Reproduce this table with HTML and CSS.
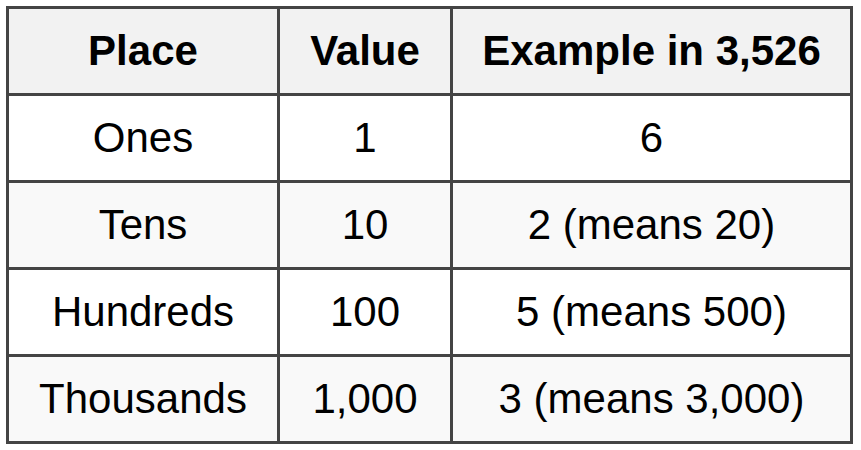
FILE: index.html
```html
<!DOCTYPE html>
<html>
<head>
<meta charset="utf-8">
<link rel="stylesheet" href="styles.css">
</head>
<body>
<table class="places">
  <thead>
    <tr><th class="c1">Place</th><th class="c2">Value</th><th class="c3">Example in 3,526</th></tr>
  </thead>
  <tbody>
    <tr><td>Ones</td><td>1</td><td>6</td></tr>
    <tr class="alt"><td>Tens</td><td>10</td><td>2 (means 20)</td></tr>
    <tr><td>Hundreds</td><td>100</td><td>5 (means 500)</td></tr>
    <tr class="alt"><td>Thousands</td><td>1,000</td><td>3 (means 3,000)</td></tr>
  </tbody>
</table>
</body>
</html>
```
FILE: styles.css
```css
html, body {
  margin: 0;
  padding: 0;
  background: #ffffff;
}
body {
  padding: 6px;
  font-family: "Liberation Sans", Arial, sans-serif;
  color: #000;
}
.places {
  border-collapse: separate;
  border-spacing: 0;
  border-top: 3px solid #444;
  border-left: 3px solid #444;
  table-layout: fixed;
  width: 847px;
}
.places th, .places td {
  box-sizing: border-box;
  border-right: 3px solid #444;
  border-bottom: 3px solid #444;
  height: 87px;
  padding: 0;
  text-align: center;
  vertical-align: middle;
  font-size: 42px;
  line-height: 1;
}
.places th {
  background: #f2f2f2;
  font-weight: bold;
}
.places .c1 { width: 271px; }
.places .c2 { width: 173px; }
.places .c3 { width: 400px; }
.places tr.alt td {
  background: #f9f9f9;
}
```
